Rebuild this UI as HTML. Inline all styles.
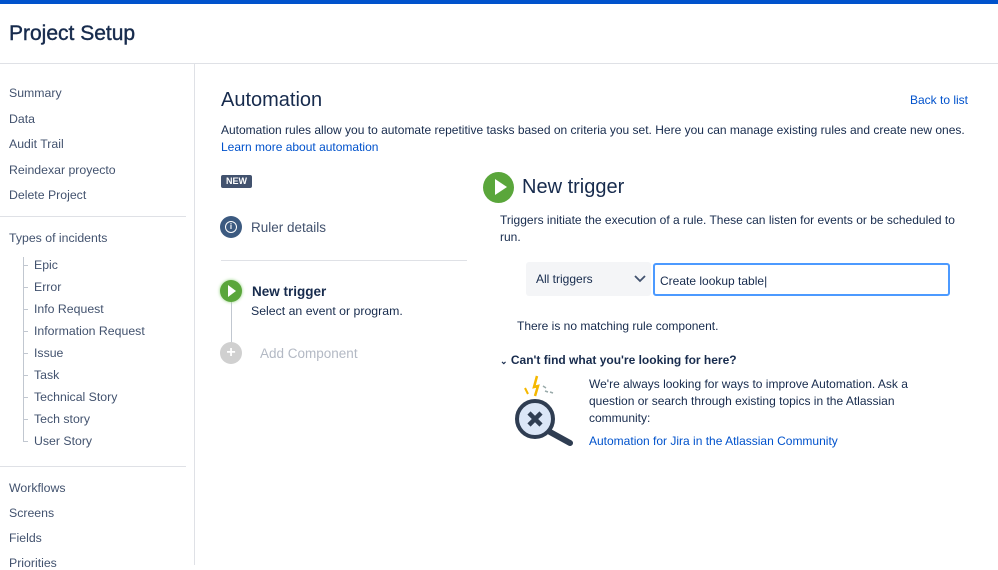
<!DOCTYPE html>
<html><head><meta charset="utf-8"><style>
*{margin:0;padding:0;box-sizing:border-box}
body{width:998px;height:565px;overflow:hidden;background:#fff;font-family:"Liberation Sans",Arial,sans-serif;color:#172b4d;position:relative}
.a{position:absolute;white-space:nowrap}
.s{font-size:12.3px;color:#42526e;left:9px}
.sub{font-size:12.3px;color:#42526e;left:34px}
.tk{position:absolute;left:23px;width:5px;height:1px;background:#c1c7d0}
a{color:#0052cc;text-decoration:none}
</style></head><body>
<div class="a" style="left:0;top:0;width:998px;height:4px;background:#0052cc"></div>
<div class="a" style="left:9px;top:22px;font-size:21px;color:#172b4d;-webkit-text-stroke:0.4px #172b4d">Project Setup</div>
<div class="a" style="left:0;top:63px;width:998px;height:1px;background:#dfe1e6"></div>
<div class="a" style="left:194px;top:64px;width:1px;height:501px;background:#dfe1e6"></div>

<div class="a s" style="top:86px">Summary</div>
<div class="a s" style="top:112px">Data</div>
<div class="a s" style="top:137px">Audit Trail</div>
<div class="a s" style="top:163px">Reindexar proyecto</div>
<div class="a s" style="top:188px">Delete Project</div>
<div class="a" style="left:0;top:216px;width:186px;height:1px;background:#dfe1e6"></div>
<div class="a s" style="top:231px">Types of incidents</div>
<div class="a" style="left:23px;top:257px;width:1px;height:185px;background:#c1c7d0"></div>
<div class="tk" style="top:265px"></div><div class="a sub" style="top:258px">Epic</div>
<div class="tk" style="top:287px"></div><div class="a sub" style="top:280px">Error</div>
<div class="tk" style="top:309px"></div><div class="a sub" style="top:302px">Info Request</div>
<div class="tk" style="top:331px"></div><div class="a sub" style="top:324px">Information Request</div>
<div class="tk" style="top:353px"></div><div class="a sub" style="top:346px">Issue</div>
<div class="tk" style="top:375px"></div><div class="a sub" style="top:368px">Task</div>
<div class="tk" style="top:397px"></div><div class="a sub" style="top:390px">Technical Story</div>
<div class="tk" style="top:419px"></div><div class="a sub" style="top:412px">Tech story</div>
<div class="tk" style="top:441px"></div><div class="a sub" style="top:434px">User Story</div>
<div class="a" style="left:0;top:466px;width:186px;height:1px;background:#dfe1e6"></div>
<div class="a s" style="top:481px">Workflows</div>
<div class="a s" style="top:506px">Screens</div>
<div class="a s" style="top:531px">Fields</div>
<div class="a s" style="top:556px">Priorities</div>

<div class="a" style="left:221px;top:89px;font-size:20px;color:#172b4d">Automation</div>
<div class="a" style="left:910px;top:93px;font-size:12px"><a>Back to list</a></div>
<div class="a" style="left:221px;top:123px;font-size:12px;color:#172b4d">Automation rules allow you to automate repetitive tasks based on criteria you set. Here you can manage existing rules and create new ones.</div>
<div class="a" style="left:221px;top:140px;font-size:12px"><a>Learn more about automation</a></div>

<div class="a" style="left:221px;top:175px;width:31px;height:13px;background:#42526e;border-radius:2px;color:#fff;font-size:9px;font-weight:bold;text-align:center;line-height:13px">NEW</div>
<div class="a" style="left:220px;top:216px;width:22px;height:22px;border-radius:50%;background:#3c5a80"></div>
<div class="a" style="left:225px;top:221px;width:12px;height:12px;border-radius:50%;border:1.3px solid #fff;color:#fff;font-size:8px;text-align:center;line-height:10px;font-weight:bold">i</div>
<div class="a" style="left:251px;top:220px;font-size:13.5px;color:#42526e">Ruler details</div>
<div class="a" style="left:221px;top:260px;width:246px;height:1px;background:#dfe1e6"></div>
<div class="a" style="left:231px;top:300px;width:1px;height:44px;background:#c1c7d0"></div>
<div class="a" style="left:220px;top:280px;width:22px;height:22px;border-radius:50%;background:#5aa63b;box-shadow:0 0 3px #8fd07a"></div>
<div class="a" style="left:228px;top:285px;width:0;height:0;border-left:8px solid #fff;border-top:6px solid transparent;border-bottom:6px solid transparent"></div>
<div class="a" style="left:252px;top:284px;font-size:13.5px;font-weight:bold;color:#172b4d">New trigger</div>
<div class="a" style="left:251px;top:304px;font-size:12.3px;color:#172b4d">Select an event or program.</div>
<div class="a" style="left:220px;top:342px;width:22px;height:22px;border-radius:50%;background:#d0d0d0;color:#fff;font-size:16px;text-align:center;line-height:22px;font-weight:bold">+</div>
<div class="a" style="left:260px;top:346px;font-size:13.5px;color:#b3b9c4">Add Component</div>

<div class="a" style="left:483px;top:172px;width:31px;height:31px;border-radius:50%;background:#5aa63b"></div>
<div class="a" style="left:495px;top:179px;width:0;height:0;border-left:12px solid #fff;border-top:8.5px solid transparent;border-bottom:8.5px solid transparent"></div>
<div class="a" style="left:522px;top:176px;font-size:20px;color:#172b4d">New trigger</div>
<div class="a" style="left:500px;top:212px;font-size:12px;color:#172b4d;white-space:normal;width:460px;line-height:17px">Triggers initiate the execution of a rule. These can listen for events or be scheduled to run.</div>
<div class="a" style="left:526px;top:262px;width:125px;height:34px;background:#f4f5f7;border-radius:3px;font-size:12px;color:#172b4d;padding:10px 0 0 10px">All triggers</div>
<svg class="a" style="left:634px;top:275px" width="12" height="8"><path d="M1 1l5 5 5-5" stroke="#42526e" stroke-width="1.8" fill="none"/></svg>
<div class="a" style="left:653px;top:263px;width:297px;height:33px;border:2px solid #4c9aff;border-radius:3px;font-size:12px;color:#172b4d;padding:9px 0 0 5px">Create lookup table|</div>
<div class="a" style="left:517px;top:319px;font-size:12px;color:#172b4d">There is no matching rule component.</div>
<div class="a" style="left:500px;top:353px;font-size:12px;font-weight:bold;color:#172b4d"><span style="font-size:9px">&#8964;</span> Can't find what you're looking for here?</div>
<svg class="a" style="left:505px;top:372px" width="75" height="75">
<path d="M32 4 l-3 11 4 -1 -3 10" stroke="#f5b800" stroke-width="2.5" fill="none"/>
<path d="M20 16 l3 6" stroke="#f5b800" stroke-width="2"/>
<path d="M38 14 l3 2 M40 19 l3 1 M45 20 l3 1" stroke="#9aa" stroke-width="1.5"/>
<circle cx="30" cy="47" r="18" fill="#dbe6f7" stroke="#2f3d52" stroke-width="4"/>
<path d="M24 41 l12 12 M36 41 l-12 12" stroke="#2f3d52" stroke-width="4.5"/>
<path d="M45 60 l20 11" stroke="#2f3d52" stroke-width="6" stroke-linecap="round"/>
</svg>
<div class="a" style="left:589px;top:376px;font-size:12px;color:#172b4d;white-space:normal;width:330px;line-height:17px">We're always looking for ways to improve Automation. Ask a question or search through existing topics in the Atlassian community:</div>
<div class="a" style="left:589px;top:434px;font-size:12px"><a>Automation for Jira in the Atlassian Community</a></div>
</body></html>
